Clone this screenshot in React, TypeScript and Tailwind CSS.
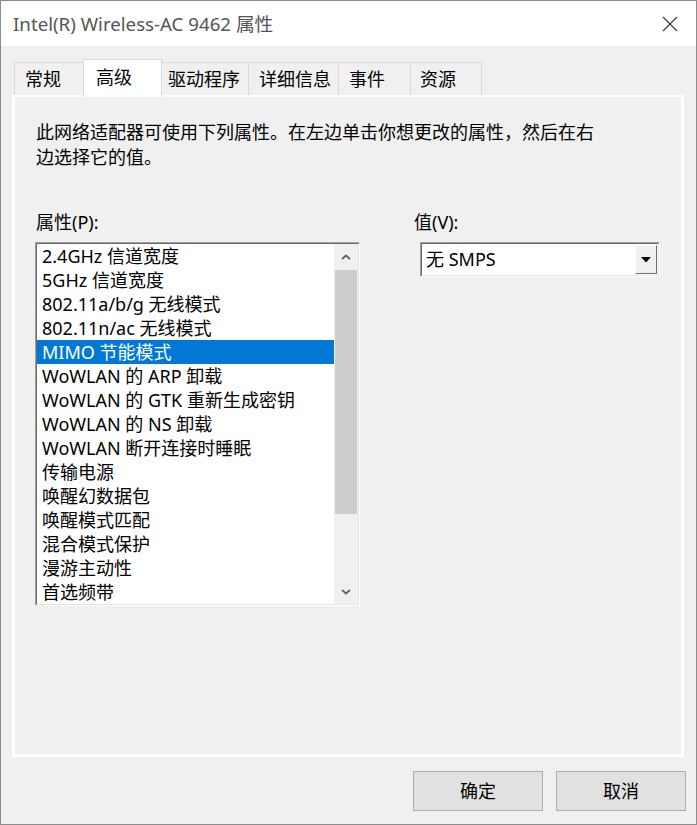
import React from "react";

const items = [
  "2.4GHz 信道宽度",
  "5GHz 信道宽度",
  "802.11a/b/g 无线模式",
  "802.11n/ac 无线模式",
  "MIMO 节能模式",
  "WoWLAN 的 ARP 卸载",
  "WoWLAN 的 GTK 重新生成密钥",
  "WoWLAN 的 NS 卸载",
  "WoWLAN 断开连接时睡眠",
  "传输电源",
  "唤醒幻数据包",
  "唤醒模式匹配",
  "混合模式保护",
  "漫游主动性",
  "首选频带",
];

const font = { fontFamily: '"Noto Sans", "Noto Sans CJK SC", sans-serif' };

function Chevron({ up }: { up?: boolean }) {
  return (
    <svg width="10" height="6" viewBox="0 0 10 6">
      {up ? (
        <polyline points="1,5 5,1.5 9,5" fill="none" stroke="#606060" strokeWidth="1.8" />
      ) : (
        <polyline points="1,1 5,4.5 9,1" fill="none" stroke="#606060" strokeWidth="1.8" />
      )}
    </svg>
  );
}

export default function App() {
  return (
    <div
      className="w-[697px] h-[825px] flex flex-col border border-[#8c8c8c] bg-[#f0f0f0] text-black text-[18px] leading-[24px]"
      style={{ fontFamily: '"Noto Sans", "Noto Sans CJK SC", sans-serif' }}
    >
      {/* Title bar */}
      <div className="h-[45px] bg-white flex items-center justify-between pl-[12px] pr-[18px] shrink-0">
        <span className="text-[#555555] text-[18.7px]">Intel(R) Wireless-AC 9462 属性</span>
        <svg width="16" height="16" viewBox="0 0 16 16">
          <line x1="1" y1="1" x2="15" y2="15" stroke="#333" strokeWidth="1.1" />
          <line x1="15" y1="1" x2="1" y2="15" stroke="#333" strokeWidth="1.1" />
        </svg>
      </div>

      <div className="flex flex-col pl-[11px] pr-[12px]">
        {/* Tabs */}
        <div className="mt-[13px] h-[36px] flex items-end pl-[2px]">
          <div className="w-[71px] h-[33px] flex items-center pl-[10px] border-t border-l border-[#d9d9d9] bg-[#f0f0f0]">常规</div>
          <div className="relative z-10 -mx-[2px] w-[79px] h-[38px] -mb-[2px] flex items-center pl-[12px] pb-[4px] border-t border-l border-r border-[#d9d9d9] bg-white">高级</div>
          <div className="w-[88px] h-[33px] flex items-center pl-[8px] border-t border-[#d9d9d9] bg-[#f0f0f0]">驱动程序</div>
          <div className="w-[90px] h-[33px] flex items-center pl-[10px] border-t border-l border-[#d9d9d9] bg-[#f0f0f0]">详细信息</div>
          <div className="w-[72px] h-[33px] flex items-center pl-[10px] border-t border-l border-[#d9d9d9] bg-[#f0f0f0]">事件</div>
          <div className="w-[72px] h-[33px] flex items-center pl-[9px] border-t border-l border-r border-[#d9d9d9] bg-[#f0f0f0]">资源</div>
        </div>

        {/* Panel */}
        <div className="h-[662px] border-t-2 border-l-[3px] border-r-[3px] border-b-[3px] border-white bg-[#f0f0f0] flex flex-col">
          <div className="pl-[21px] pt-[23px] leading-[25px]">
            此网络适配器可使用下列属性。在左边单击你想更改的属性，然后在右
            <br />
            边选择它的值。
          </div>

          <div className="flex mt-[40px] pl-[20px]">
            {/* Left column */}
            <div className="flex flex-col">
              <div className="pl-[1px] h-[24px]">属性(P):</div>
              <div className="mt-[8px] w-[325px] border border-t-[#a0a0a0] border-l-[#a0a0a0] border-r-white border-b-white">
                <div className="border border-t-[#696969] border-l-[#696969] border-r-[#e3e3e3] border-b-[#e3e3e3] bg-white flex h-[362px]">
                  <div className="flex-1 flex flex-col">
                    {items.map((it, i) => (
                      <div
                        key={it}
                        className={
                          i === 4
                            ? "h-[24px] pl-[5px] flex items-center whitespace-nowrap bg-[#0078d7] text-white"
                            : "h-[24px] pl-[5px] flex items-center whitespace-nowrap"
                        }
                      >
                        {it}
                      </div>
                    ))}
                  </div>
                  <div className="w-[24px] bg-[#f0f0f0] flex flex-col">
                    <div className="h-[25px] flex items-center justify-center">
                      <Chevron up />
                    </div>
                    <div className="mt-[1px] mx-[1px] h-[244px] bg-[#cdcdcd]" />
                    <div className="flex-1" />
                    <div className="h-[25px] flex items-center justify-center">
                      <Chevron />
                    </div>
                  </div>
                </div>
              </div>
            </div>

            {/* Right column */}
            <div className="flex flex-col ml-[54px]">
              <div className="h-[24px]">值(V):</div>
              <div className="mt-[8px] ml-[6px] w-[240px] h-[35px] border border-t-[#a0a0a0] border-l-[#a0a0a0] border-r-white border-b-white">
                <div className="h-full border border-t-[#696969] border-l-[#696969] border-r-[#e3e3e3] border-b-[#e3e3e3] bg-white flex items-center">
                  <div className="flex-1 pl-[4px] pb-[2px]">无 SMPS</div>
                  <div className="w-[22px] h-[29px] mr-[1px] border border-t-white border-l-white border-r-[#696969] border-b-[#696969] bg-[#f0f0f0] flex items-center justify-center">
                    <svg width="10" height="6" viewBox="0 0 10 6">
                      <polygon points="0,0 10,0 5,5.5" fill="#000" />
                    </svg>
                  </div>
                </div>
              </div>
            </div>
          </div>
        </div>

        {/* Buttons */}
        <div className="flex justify-end gap-[13px] mt-[14px]">
          <button className="w-[130px] h-[40px] bg-[#e1e1e1] border border-[#adadad] flex items-center justify-center" style={font}>
            确定
          </button>
          <button className="w-[130px] h-[40px] bg-[#e1e1e1] border border-[#adadad] flex items-center justify-center mr-[-2px]" style={font}>
            取消
          </button>
        </div>
      </div>
    </div>
  );
}
